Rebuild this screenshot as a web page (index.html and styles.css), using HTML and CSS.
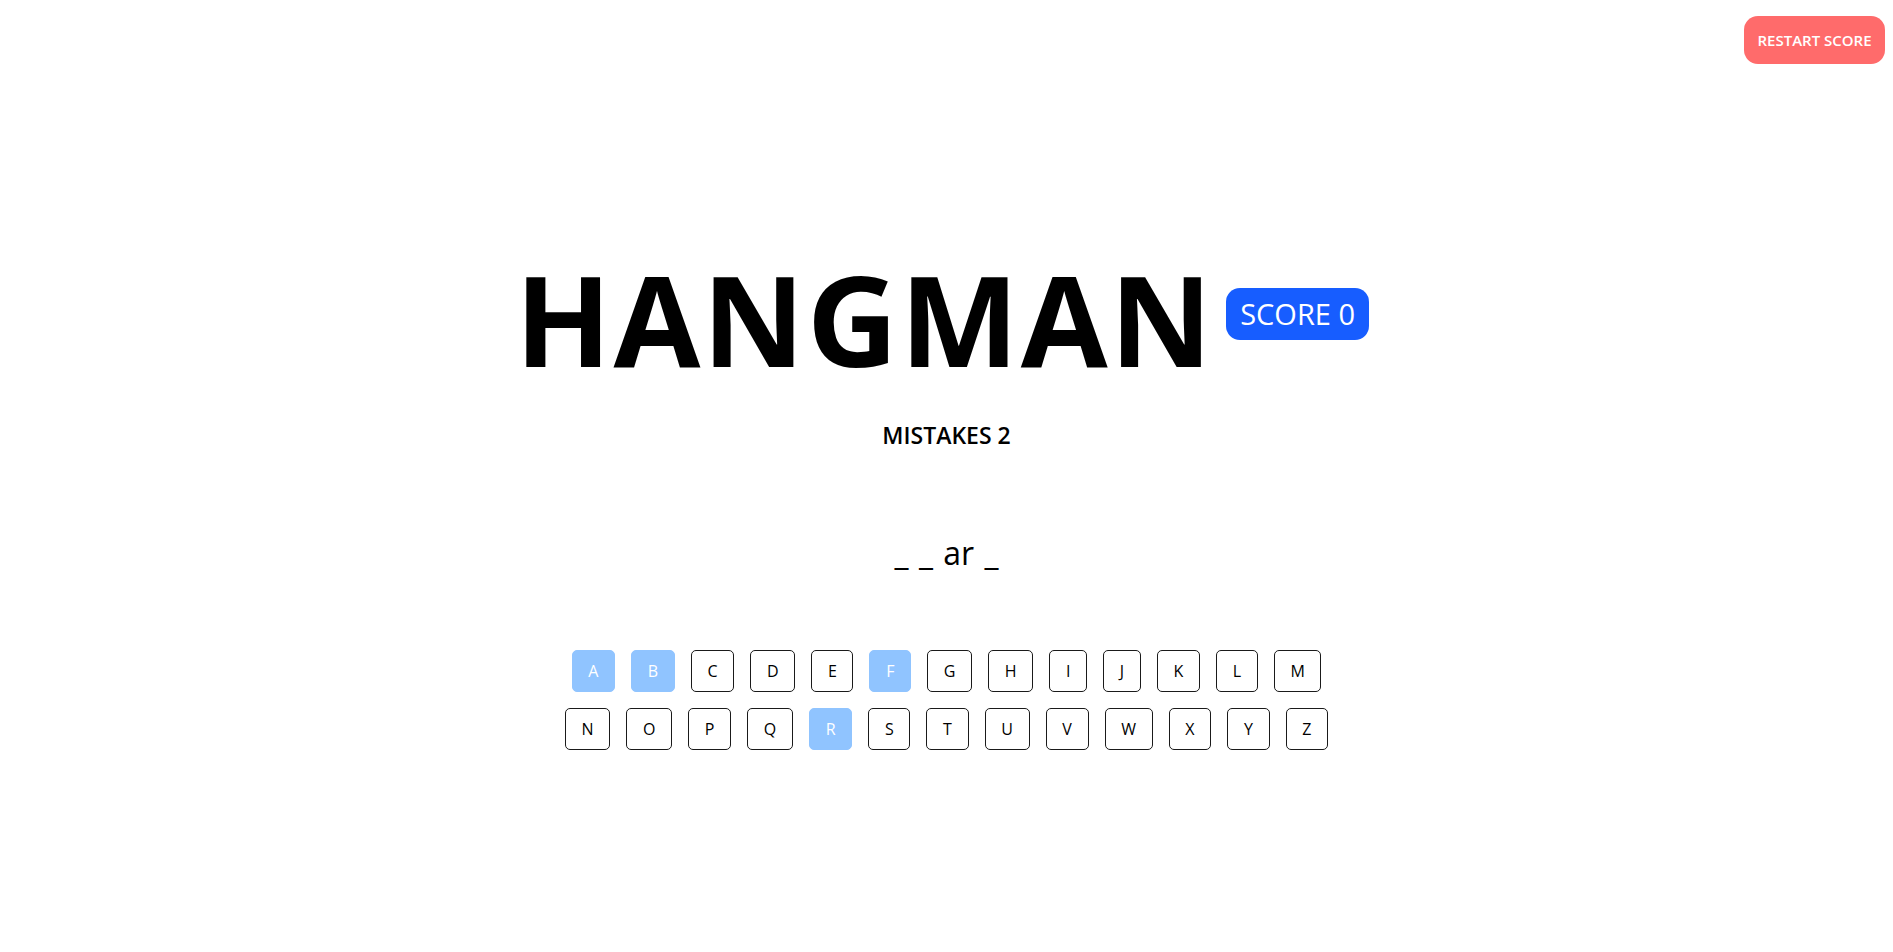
FILE: index.html
```html
<!DOCTYPE html>
<html lang="en">
<head>
<meta charset="utf-8">
<title>Hangman</title>
<link rel="stylesheet" href="styles.css">
</head>
<body>
<header class="topbar">
  <button class="restart">RESTART SCORE</button>
</header>
<main class="game">
  <div class="title-row">
    <h1 class="title">HANGMAN</h1>
    <span class="score">SCORE 0</span>
  </div>
  <div class="mistakes">MISTAKES 2</div>
  <div class="word">_ _ ar _</div>
  <div class="keyboard">
    <div class="key-row">
      <button class="key used">A</button>
      <button class="key used">B</button>
      <button class="key">C</button>
      <button class="key">D</button>
      <button class="key">E</button>
      <button class="key used">F</button>
      <button class="key">G</button>
      <button class="key">H</button>
      <button class="key">I</button>
      <button class="key">J</button>
      <button class="key">K</button>
      <button class="key">L</button>
      <button class="key">M</button>
    </div>
    <div class="key-row">
      <button class="key">N</button>
      <button class="key">O</button>
      <button class="key">P</button>
      <button class="key">Q</button>
      <button class="key used">R</button>
      <button class="key">S</button>
      <button class="key">T</button>
      <button class="key">U</button>
      <button class="key">V</button>
      <button class="key">W</button>
      <button class="key">X</button>
      <button class="key">Y</button>
      <button class="key">Z</button>
    </div>
  </div>
</main>
</body>
</html>
```
FILE: styles.css
```css
* { box-sizing: border-box; }
html, body { margin: 0; padding: 0; background: #fff; }
body {
  font-family: "Open Sans", "Noto Sans", sans-serif;
  color: #000;
}
.topbar {
  display: flex;
  justify-content: flex-end;
  padding: 16px 8px 0 0;
}
.restart {
  font-family: inherit;
  font-size: 15px;
  font-weight: 600;
  line-height: 20px;
  color: #fff;
  background: #ff6b6b;
  border: none;
  border-radius: 14px;
  padding: 14px 13px;
  height: 48px;
  width: 141px;
  cursor: pointer;
}
.game {
  display: flex;
  flex-direction: column;
  align-items: center;
  padding-top: 191px;
}
.title-row {
  display: flex;
  align-items: center;
  gap: 12px;
  margin-right: 9px;
}
.title {
  margin: 0;
  font-size: 126px;
  font-weight: 700;
  line-height: 1;
  letter-spacing: 2px;
}
.score {
  background: #175dff;
  color: #fff;
  font-size: 29px;
  line-height: 40px;
  padding: 6px 14px;
  border-radius: 14px;
  margin-bottom: 8px;
}
.mistakes {
  margin-top: 42px;
  font-size: 23px;
  font-weight: 600;
  line-height: 24px;
}
.word {
  margin-top: 90px;
  font-size: 32px;
  line-height: 32px;
  word-spacing: 2px;
}
.keyboard {
  margin-top: 73px;
  display: flex;
  flex-direction: column;
  align-items: center;
}
.key-row {
  display: flex;
  justify-content: center;
}
.key {
  font-family: inherit;
  font-size: 16px;
  line-height: 20px;
  color: #000;
  background: #fff;
  border: 1px solid #1a1a1a;
  border-radius: 5px;
  padding: 10px 15.7px;
  margin: 8px;
  height: 42px;
  cursor: pointer;
}
.key.used {
  background: #90c4ff;
  border-color: #90c4ff;
  color: #fff;
}
```
